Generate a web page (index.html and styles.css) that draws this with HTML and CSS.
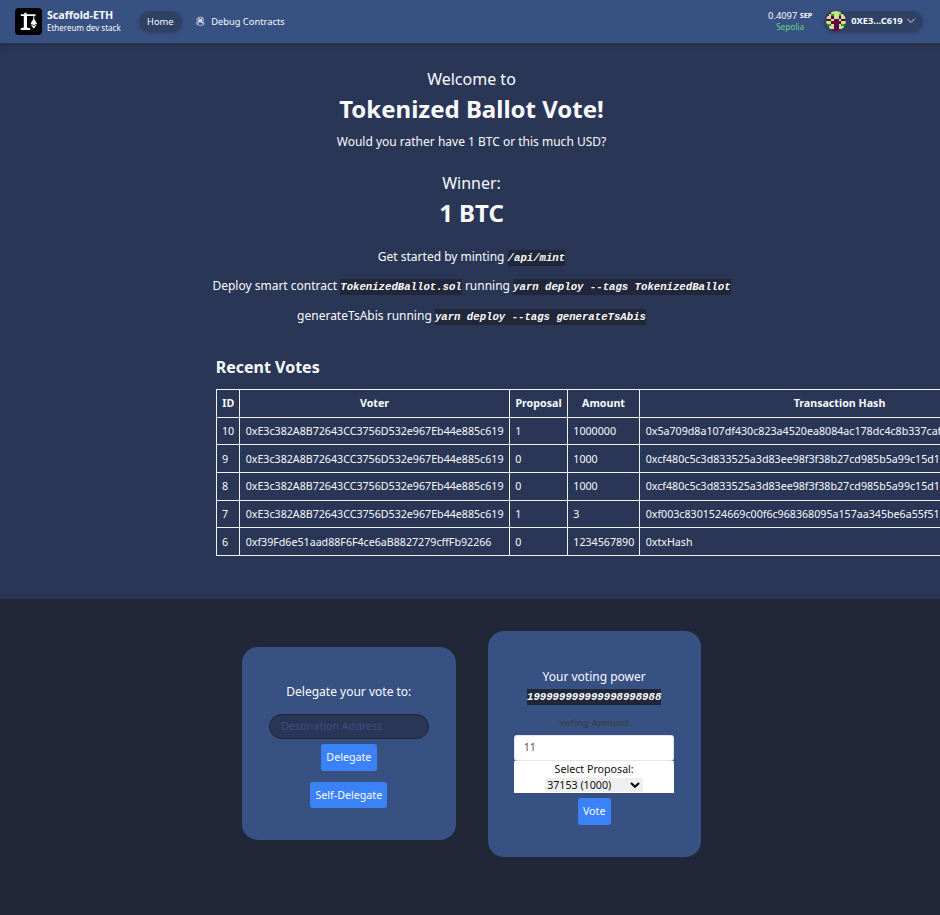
FILE: index.html
```html
<!DOCTYPE html>
<html lang="en">
<head>
<meta charset="utf-8">
<title>Tokenized Ballot Vote</title>
<link rel="stylesheet" href="styles.css">
</head>
<body>
<div class="page">
  <header class="navbar">
    <div class="brand">
      <svg class="logo" viewBox="0 0 27 27"><rect width="27" height="27" rx="4" fill="#000"/><path d="M5.800 6.200h3.500V4.800h2.200v1.400h9v1.900h-8.500v11.400l3.200.8v1.700H5.800v-1.700l3-.8V8.100h-3z" fill="#fff"/><path d="M18.800 8v4" stroke="#fff" stroke-width=".9"/><path d="M18.800 10.500l3.300 5-3.300 1.700-3.300-1.700zM15.600 16.200l3.200 1.800 3.200-1.800-3.200 4.500z" fill="#fff"/></svg>
      <div class="brand-text"><b>Scaffold-ETH</b><span>Ethereum dev stack</span></div>
    </div>
    <nav class="menu">
      <a class="active">Home</a>
      <a><svg class="bug" viewBox="0 0 24 24" fill="none" stroke="currentColor" stroke-width="1.5" stroke-linecap="round" stroke-linejoin="round"><path d="M12 12.75c1.148 0 2.278.08 3.383.237 1.037.146 1.866.966 1.866 2.013 0 3.728-2.35 6.75-5.25 6.75S6.75 18.728 6.75 15c0-1.046.83-1.867 1.866-2.013A24.204 24.204 0 0112 12.75zm0 0c2.883 0 5.647.508 8.207 1.440a23.910 23.910 0 01-1.152 6.060M12 12.750c-2.883 0-5.647.508-8.208 1.440.125 2.104.52 4.136 1.153 6.060M12 12.750a2.250 2.250 0 002.248-2.354M12 12.750a2.250 2.250 0 01-2.248-2.354M12 8.250c.995 0 1.971-.08 2.922-.236.403-.066.74-.358.795-.762a3.778 3.778 0 00-.399-2.250M12 8.250c-.995 0-1.970-.08-2.922-.236-.402-.066-.74-.358-.795-.762a3.734 3.734 0 01.4-2.253M12 8.250a2.250 2.250 0 00-2.248 2.146M12 8.250a2.250 2.250 0 012.248 2.146M8.683 5a6.032 6.032 0 01-1.155-1.002c.07-.63.27-1.222.574-1.747m.581 2.749A3.750 3.750 0 0115.318 5m0 0c.427-.283.815-.62 1.155-.999a4.471 4.471 0 00-.575-1.752M4.921 6a24.048 24.048 0 00-.392 3.314c1.668.546 3.416.914 5.223 1.082M19.080 6c.205 1.080.337 2.187.392 3.314a23.882 23.882 0 01-5.223 1.082"/></svg>Debug Contracts</a>
    </nav>
    <div class="account">
      <div class="balance"><span>0.4097 <b>SEP</b></span><span class="network">Sepolia</span></div>
      <button class="wallet">
        <svg class="avatar" viewBox="0 0 8 8" shape-rendering="crispEdges"><rect width="8" height="8" fill="#5b0a45"/><path fill="#d3dc94" d="M2 0h4v1H2zM1 1h1v1H1zM3 1h2v1H3zM6 1h1v1H6zM0 2h2v1H0zM3 2h2v1H3zM6 2h2v1H6zM2 3h1v1H2zM5 3h1v1H5zM0 4h2v1H0zM6 4h2v1H6zM2 5h1v2H2zM5 5h1v2H5zM1 6h1v1H1zM6 6h1v1H6z"/><path fill="#0ca90c" d="M2 1h1v1H2zM5 1h1v1H5zM0 5h2v1H0zM6 5h2v1H6z"/></svg>
        <span>0XE3...C619</span>
        <svg class="chevron" viewBox="0 0 24 24" fill="none" stroke="currentColor" stroke-width="2" stroke-linecap="round" stroke-linejoin="round"><path d="M20 7.500l-8 8-8-8"/></svg>
      </button>
    </div>
  </header>

  <main>
    <section class="intro">
      <h1><span class="lead">Welcome to</span><span class="headline">Tokenized Ballot Vote!</span></h1>
      <p class="question">Would you rather have 1 BTC or this much USD?</p>
      <h2><span class="lead">Winner:</span><span class="headline">1 BTC</span></h2>
      <p class="step">Get started by minting <code>/api/mint</code></p>
      <p class="step">Deploy smart contract <code>TokenizedBallot.sol</code> running <code>yarn deploy --tags TokenizedBallot</code></p>
      <p class="step">generateTsAbis running <code>yarn deploy --tags generateTsAbis</code></p>
    </section>

    <section class="votes">
      <h3>Recent Votes</h3>
      <table>
        <colgroup><col class="c-id"><col class="c-voter"><col class="c-proposal"><col class="c-amount"><col class="c-hash"></colgroup>
        <thead><tr><th>ID</th><th>Voter</th><th>Proposal</th><th>Amount</th><th>Transaction Hash</th></tr></thead>
        <tbody>
          <tr><td>10</td><td>0xE3c382A8B72643CC3756D532e967Eb44e885c619</td><td>1</td><td>1000000</td><td>0x5a709d8a107df430c823a4520ea8084ac178dc4c8b337caf</td></tr>
          <tr><td>9</td><td>0xE3c382A8B72643CC3756D532e967Eb44e885c619</td><td>0</td><td>1000</td><td>0xcf480c5c3d833525a3d83ee98f3f38b27cd985b5a99c15d1</td></tr>
          <tr><td>8</td><td>0xE3c382A8B72643CC3756D532e967Eb44e885c619</td><td>0</td><td>1000</td><td>0xcf480c5c3d833525a3d83ee98f3f38b27cd985b5a99c15d1</td></tr>
          <tr><td>7</td><td>0xE3c382A8B72643CC3756D532e967Eb44e885c619</td><td>1</td><td>3</td><td>0xf003c8301524669c00f6c968368095a157aa345be6a55f51</td></tr>
          <tr><td>6</td><td>0xf39Fd6e51aad88F6F4ce6aB8827279cffFb92266</td><td>0</td><td>1234567890</td><td>0xtxHash</td></tr>
        </tbody>
      </table>
    </section>

    <section class="actions">
      <div class="card">
        <p>Delegate your vote to:</p>
        <input class="address" type="text" placeholder="Destination Address">
        <button class="btn">Delegate</button>
        <button class="btn self">Self-Delegate</button>
      </div>
      <div class="card power">
        <p>Your voting power</p>
        <code>199999999999998998988</code>
        <label class="amount-label" for="amount">voting Amount</label>
        <input class="amount" id="amount" type="text" value="11">
        <div class="proposal">
          <span>Select Proposal:</span>
          <div class="select"><span>37153 (1000)</span><svg viewBox="0 0 10 6"><path d="M1 1l4 3.800L9 1" fill="none" stroke="#000" stroke-width="2"/></svg></div>
        </div>
        <button class="btn">Vote</button>
      </div>
    </section>
  </main>
</div>
</body>
</html>
```
FILE: styles.css
```css
html { font-size: 10.6667px; overflow: hidden; }
* { box-sizing: border-box; margin: 0; }
body {
  overflow: hidden;
  background: #212638;
  color: #f9fbff;
  font: 1rem/1.5 "Noto Sans", sans-serif;
}
button, input { font: inherit; color: inherit; }
.page { width: 943px; height: 915px; display: flex; flex-direction: column; }

.navbar {
  position: relative;
  z-index: 1;
  flex: none;
  height: 4rem;
  display: flex;
  align-items: center;
  padding: 0 20.33px 0 15px;
  background: #385183;
  box-shadow: 0 2.7px 4px -1px #2126387a, 0 1.3px 2.7px -1.300px #21263866;
}
.brand { display: flex; align-items: center; gap: 5px; width: 124px; }
.logo { width: 27px; height: 27px; }
.brand-text { display: flex; flex-direction: column; white-space: nowrap; }
.brand-text b { font-size: 10.67px; line-height: 13.33px; }
.brand-text span { font-size: 8px; line-height: 12px; }
.menu { display: flex; gap: 5.33px; font-size: 9.33px; line-height: 13.33px; }
.menu a { display: flex; align-items: center; gap: 5.600px; padding: 4px 8px; border-radius: 11px; height: 21.33px; }
.menu .active { background: #2f4165; box-shadow: 0 1.300px 3px #2126384d; }
.bug { width: 10.67px; height: 10.67px; }
.account { margin-left: auto; display: flex; align-items: center; gap: 12px; }
.balance { display: flex; flex-direction: column; align-items: center; font-size: 9.33px; line-height: 11px; }
.balance b { font-size: 7.2px; position: relative; top: -.6px; }
.network { color: #68d67e; font-size: 8.2px; position: relative; top: -.6px; }
.wallet {
  display: flex;
  align-items: center;
  height: 21.33px;
  padding: 0 7px 0 2px;
  border: 0;
  border-radius: 11px;
  background: #2f4165;
  box-shadow: 0 1.300px 3px #2126384d;
  font-size: 9.33px;
  font-weight: 700;
}
.avatar { width: 20px; height: 20px; border-radius: 50%; }
.wallet span { margin: 0 3px 0 5px; }
.chevron { width: 10px; height: 10px; }

main { display: flex; flex-direction: column; flex: 1; background: #2a3655; }
.intro { padding-top: 2.500rem; text-align: center; }
h1, h2 { font-weight: 400; }
.lead { display: block; font-size: 16px; line-height: 21.33px; margin-bottom: 5.33px; }
.headline { display: block; font-size: 24px; line-height: 26.67px; font-weight: 700; }
.question { font-size: 12px; line-height: 18.67px; margin: 10px 0 21.800px; }
h2 { margin-bottom: 21.33px; }
.step { font-size: 12px; line-height: 18.67px; margin-bottom: 10.67px; }
.step:last-child { margin-top: 11.300px; margin-bottom: 10.040px; }
code {
  background: #212638;
  font: italic 700 10.67px/16px "Liberation Mono", monospace;
  padding: 2px 0;
}

.votes { margin: 21px 0 0 216px; }
h3 { font-size: 16px; line-height: 21.33px; margin-bottom: 11px; margin-left: -.3px; }
table { width: 823px; table-layout: fixed; border-collapse: collapse; }
th, td { border: 1px solid #f1f3f9; padding: 5.33px; white-space: nowrap; text-align: left; line-height: 16px; }
td:first-child { padding-left: 5px; }
td:nth-child(2), td:nth-child(5) { padding-left: 5.700px; }
th { text-align: center; }
.c-id { width: 23px; }
.c-voter { width: 270px; }
.c-proposal { width: 58px; }
.c-amount { width: 72px; }
.c-hash { width: 400px; }

.actions {
  display: flex;
  justify-content: center;
  align-items: center;
  gap: 32px;
  margin-top: 43px;
  flex: 1;
  padding-bottom: 26.500px;
  background: #212638;
}
.card {
  width: 213.33px;
  height: 193px;
  display: flex;
  flex-direction: column;
  align-items: center;
  padding-top: 36px;
  border-radius: 16px;
  background: #385183;
}
.card.power { height: 226px; padding-top: 36.800px; }
.card p { font-size: 12px; line-height: 18.67px; }
.address {
  width: 160px;
  height: 25px;
  margin: 12px 0 5px;
  padding: 0 11.500px 1px;
  border: 1px solid #212638;
  border-radius: 13px;
  background: #2a3655;
}
.address::placeholder { color: #385183; opacity: 1; }
.btn {
  flex: none;
  height: 26.67px;
  padding: 0 5.33px;
  border: 0;
  border-radius: 2.67px;
  background: #3b82f6;
}
.btn.self { margin-top: 11px; }
.power code { margin-top: 2.400px; line-height: 12px; }
.amount-label { margin: 11px 0 6px; color: #374151; font-size: 9.33px; font-weight: 700; line-height: 13.33px; }
.amount {
  width: 160px;
  height: 26px;
  padding: 0 8.500px 2px;
  border: 1px solid #e5e7eb;
  border-radius: 2.67px;
  background: #fff;
  color: #6b4a66;
}
.proposal {
  width: 160px;
  height: 32px;
  margin-bottom: 5px;
  display: flex;
  flex-direction: column;
  align-items: center;
  background: #fff;
  color: #111;
  line-height: 16px;
}
.select {
  width: 98px;
  height: 14px;
  margin-top: 1px;
  padding: 0 3px 0 2px;
  display: flex;
  align-items: center;
  justify-content: space-between;
  background: #efefef;
}
.select svg { width: 10px; height: 6px; }
```
